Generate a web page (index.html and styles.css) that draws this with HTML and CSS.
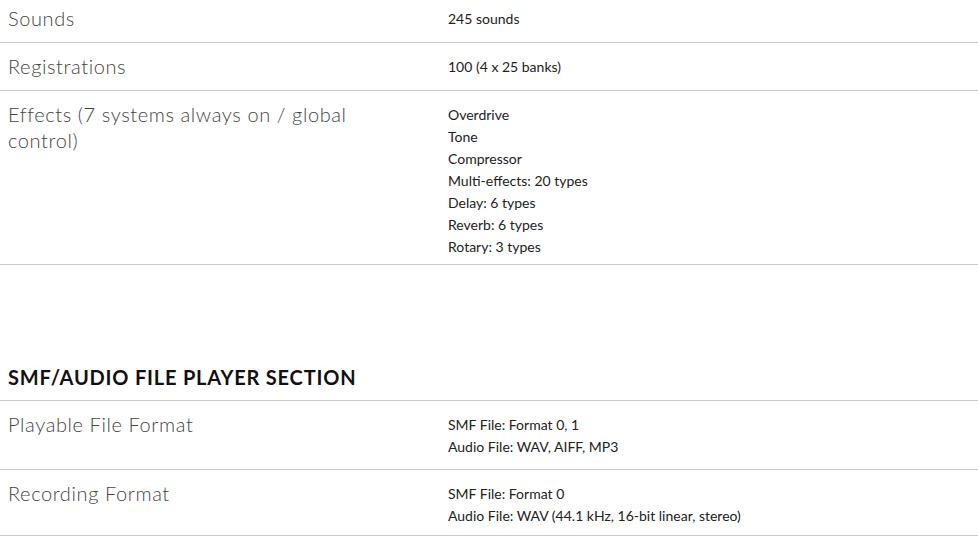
FILE: index.html
```html
<!DOCTYPE html>
<html lang="en">
<head>
<meta charset="utf-8">
<title>Specifications</title>
<link rel="stylesheet" href="styles.css">
</head>
<body>
<div class="specs">
  <div class="row row-first">
    <div class="label">Sounds</div>
    <div class="value"><div>245 sounds</div></div>
  </div>
  <div class="row">
    <div class="label">Registrations</div>
    <div class="value"><div>100 (4 x 25 banks)</div></div>
  </div>
  <div class="row">
    <div class="label">Effects (7 systems always on / global control)</div>
    <div class="value">
      <div>Overdrive</div>
      <div>Tone</div>
      <div>Compressor</div>
      <div>Multi-effects: 20 types</div>
      <div>Delay: 6 types</div>
      <div>Reverb: 6 types</div>
      <div>Rotary: 3 types</div>
    </div>
  </div>

  <h2 class="section-title">SMF/AUDIO FILE PLAYER SECTION</h2>
  <div class="row">
    <div class="label">Playable File Format</div>
    <div class="value value-loose">
      <div>SMF File: Format 0, 1</div>
      <div>Audio File: WAV, AIFF, MP3</div>
    </div>
  </div>
  <div class="row">
    <div class="label">Recording Format</div>
    <div class="value value-last">
      <div>SMF File: Format 0</div>
      <div>Audio File: WAV (44.1 kHz, 16-bit linear, stereo)</div>
    </div>
  </div>
</div>
</body>
</html>
```

FILE: styles.css
```css
html, body {
  margin: 0;
  padding: 0;
  background: #ffffff;
}

body {
  font-family: Lato, "Open Sans", "Liberation Sans", sans-serif;
  color: #222222;
}

.specs {
  width: 100%;
}

.row {
  display: grid;
  grid-template-columns: 448px 1fr;
  border-bottom: 1px solid #cccccc;
  padding: 10px 0 6px 0;
}

.row-first {
  padding-top: 5px;
}

.label {
  padding-left: 8px;
  padding-right: 50px;
  padding-bottom: 5px;
  font-size: 20px;
  line-height: 26px;
  font-weight: 300;
  letter-spacing: 0.6px;
  color: #444444;
}

.value {
  margin-top: 3px;
  font-size: 14px;
  line-height: 22px;
  color: #222222;
}

.value-loose {
  padding-bottom: 5px;
}

.value-last {
  padding-bottom: 2px;
}

.section-title {
  margin: 99px 0 0 0;
  padding: 0 0 10px 8px;
  font-size: 20px;
  line-height: 26px;
  font-weight: 700;
  letter-spacing: 0.8px;
  color: #111111;
  border-bottom: 1px solid #cccccc;
}
```
